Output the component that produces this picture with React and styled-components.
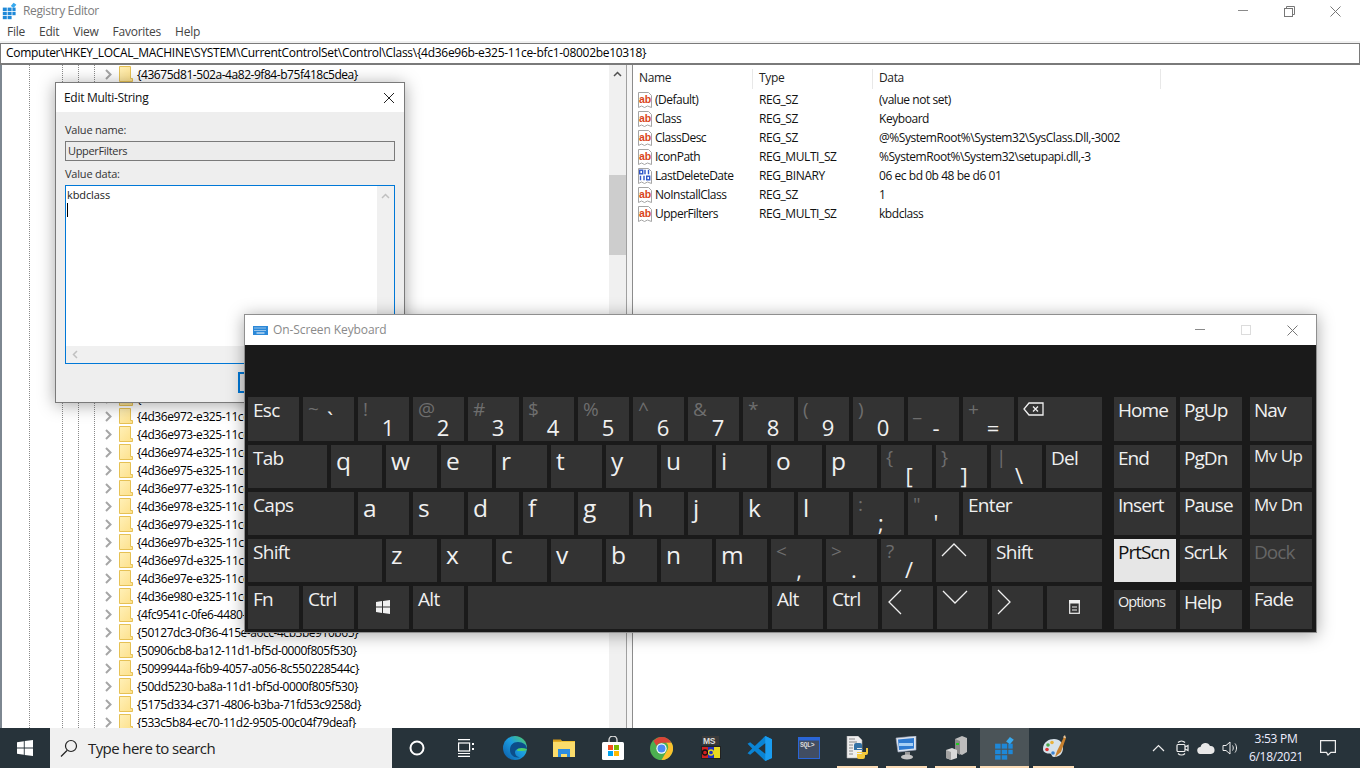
import React from 'react';
import styled, { createGlobalStyle } from 'styled-components';

const Global = createGlobalStyle`
  html, body { margin: 0; padding: 0; background: #fff; }
  body { font-family: "Open Sans", "Noto Sans", sans-serif; overflow: hidden; }
  * { box-sizing: border-box; }
`;
const UI = `"Open Sans", "Noto Sans", sans-serif`;

const Screen = styled.div`position: relative; width: 1360px; height: 768px; overflow: hidden; display: flex; flex-direction: column; background: #fff; font-family: ${UI}; font-size: 12px; letter-spacing: -0.35px;`;
const TitleBar = styled.div`height: 22px; display: flex; align-items: center; padding-left: 2px; color: #7c7c7c; flex: none;`;
const TitleText = styled.span`margin-left: 5px; margin-top: -2px;`;
const WinButtons = styled.div`margin-left: auto; display: flex; align-items: center; height: 22px; padding-right: 2px;`;
const WinBtn = styled.div`width: 46px; height: 22px; display: flex; align-items: center; justify-content: center;`;
const MenuBar = styled.div`height: 19px; display: flex; align-items: center; padding-left: 7px; gap: 14px; color: #444; flex: none; letter-spacing: -0.25px;`;
const MenuItem = styled.span``;
const AddressBar = styled.div`height: 24px; flex: none; margin-top: 0; background: #f0f0f0; padding-top: 2px;`;
const AddressField = styled.div`height: 22px; background: #fff; border: 1px solid #7a7a7a; border-bottom-width: 2px; padding-left: 5px; line-height: 18px; color: #000; letter-spacing: -0.29px;`;
const Panes = styled.div`flex: 1; display: flex; min-height: 0;`;
const TreePane = styled.div`width: 626px; flex: none; display: flex; border-left: 2px solid #7d8791;`;
const Tree = styled.div`flex: 1; overflow: hidden;
  background-image: repeating-linear-gradient(to bottom, #8a8a8a 0 1px, transparent 1px 2px), repeating-linear-gradient(to bottom, #8a8a8a 0 1px, transparent 1px 2px), repeating-linear-gradient(to bottom, #8a8a8a 0 1px, transparent 1px 2px), repeating-linear-gradient(to bottom, #8a8a8a 0 1px, transparent 1px 2px);
  background-size: 1px 100%; background-repeat: no-repeat;
  background-position: 27px 0, 60px 0, 76px 0, 92px 0;`;
const TreeRow = styled.div`height: 18px; flex: none; display: flex; align-items: center; padding-left: 102px; color: #000; white-space: nowrap;`;
const RowText = styled.span`margin-left: 4px; letter-spacing: -0.45px;`;
const ScrollBar = styled.div`width: 17px; flex: none; background: #f0f0f0; display: flex; flex-direction: column; align-items: center; padding-top: 6px;`;
const Thumb = styled.div`width: 100%; height: 80px; background: #cdcdcd; margin-top: 98px;`;
const ScrollEnd = styled.div`margin-top: auto; height: 8px;`;
const Splitter = styled.div`width: 6px; flex: none; background: #f5f5f5; border-left: 1px solid #a0a0a0;`;
const ListPane = styled.div`flex: 1; border-left: 1px solid #8c8c8c; padding-top: 4px; min-width: 0;`;
const ListHead = styled.div`height: 20px; display: flex; color: #222;`;
const HeadCell = styled.div`width: ${p => p.$w}px; flex: none; padding-left: 6px; line-height: 18px; border-right: 1px solid #e8e8e8;`;
const ListRow = styled.div`height: 19px; display: flex; align-items: center; color: #111; margin-top: ${p => p.$first ? 1 : 0}px;`;
const NameCell = styled.div`width: 120px; flex: none; display: flex; align-items: center; padding-left: 4px; gap: 2px; white-space: nowrap; letter-spacing: -0.5px;`;
const TypeCell = styled.div`width: 120px; flex: none; padding-left: 6px; letter-spacing: -0.42px;`;
const DataCell = styled.div`padding-left: 6px; white-space: nowrap; letter-spacing: -0.45px;`;

const Taskbar = styled.div`height: 40px; flex: none; background: #27333a; display: flex; align-items: stretch; border-top: 0;`;
const StartBtn = styled.div`width: 50px; display: flex; align-items: center; justify-content: center; flex: none;`;
const SearchBox = styled.div`width: 342px; flex: none; background: #f0f0f0; display: flex; align-items: center; padding-left: 10px; gap: 10px; color: #222; font-size: 15px; letter-spacing: -0.58px;`;
const TaskIcon = styled.div`position: relative; width: 49px; flex: none; display: flex; align-items: center; justify-content: center; background: ${p => p.$active ? '#4b5458' : 'transparent'};
  &::after { content: ""; display: ${p => p.$open ? 'block' : 'none'}; position: absolute; bottom: 0; left: ${p => p.$active ? 0 : 4}px; right: ${p => p.$active ? 0 : 4}px; height: 2px; background: #fbdcb6; }`;
const Tray = styled.div`margin-left: 68px; display: flex; align-items: center; flex: none; color: #eee;`;
const TrayItem = styled.div`width: 24px; display: flex; justify-content: center; align-items: center;`;
const Clock = styled.div`width: 66px; text-align: center; line-height: 18px; font-size: 12px; color: #eef; margin-left: 1px; letter-spacing: -0.3px;`;
const Notify = styled.div`width: 38px; display: flex; justify-content: center; align-items: center;`;

const Dialog = styled.div`position: absolute; left: 55px; top: 82px; width: 350px; height: 321px; background: #eeeeee; border: 1px solid #7a7a7a; box-shadow: 0 2px 16px rgba(0,0,0,.35); display: flex; flex-direction: column; color: #222;`;
const DialogTitle = styled.div`height: 29px; flex: none; background: #fff; display: flex; align-items: center; justify-content: space-between; padding: 0 9px 0 8px; color: #111; margin-bottom: 9px; letter-spacing: -0.3px;`;
const DialogLabel = styled.div`margin: ${p => p.$top || 0}px 0 0 9px; height: 18px; line-height: 18px; color: #333; font-size: 11px; letter-spacing: -0.2px;`;
const NameField = styled.div`margin: 2px 9px 0; height: 20px; border: 1px solid #7a7a7a; background: #ececec; padding-left: 2px; line-height: 17px; color: #333; font-size: 11px; letter-spacing: -0.33px;`;
const DataField = styled.div`margin: 2px 9px 0; height: 179px; border: 1px solid #0078d7; background: #fff; display: flex; flex-direction: column; overflow: hidden;`;
const DataMain = styled.div`flex: 1; display: flex; min-height: 0;`;
const DataText = styled.div`flex: 1; padding: 1px 0 0 1px; line-height: 16px; color: #222; font-size: 11px; letter-spacing: -0.1px;`;
const Caret = styled.div`width: 1px; height: 14px; background: #000;`;
const InnerVScroll = styled.div`width: 17px; background: #f0f0f0; display: flex; justify-content: center; padding-top: 7px;`;
const InnerHScroll = styled.div`height: 17px; flex: none; background: #f0f0f0; display: flex; align-items: center; padding-left: 6px;`;
const DialogBtns = styled.div`display: flex; padding: 8px 0 0 182px;`;
const OkBtn = styled.div`width: 75px; height: 21px; border: 2px solid #0078d7; background: #e1e1e1;`;

const Keyboard = styled.div`position: absolute; left: 244px; top: 314px; width: 1073px; height: 319px; background: #1a1a1a; border: 1px solid #8f8f8f; box-shadow: 0 2px 16px rgba(0,0,0,.35); display: flex; flex-direction: column; letter-spacing: 0;`;
const KbTitle = styled.div`height: 30px; flex: none; background: #fff; display: flex; align-items: center; padding-left: 8px; color: #8a8a8a; font-size: 12px; letter-spacing: -0.1px;`;
const KbTitleText = styled.span`margin: -2px 0 0 5px;`;
const KbBtns = styled.div`margin-left: auto; display: flex; margin-right: 1px; align-items: center;`;
const KbBtn = styled.div`width: 46px; height: 30px; display: flex; align-items: center; justify-content: center;`;
const KbBody = styled.div`flex: 1; display: flex; padding: 52px 0 0 3px; gap: 12px;`;
const KeyGrid = styled.div`display: flex; flex-direction: column; gap: 4px;`;
const KeyRow = styled.div`display: flex; gap: 4px; height: ${p => p.$tall ? 44 : 43}px;`;
const Key = styled.div`width: ${p => p.$w}px; margin-top: ${p => p.$drop || 0}px; margin-left: ${p => p.$gap || 0}px; flex: none; background: ${p => p.$lit ? '#e6e6e6' : '#333333'}; color: ${p => p.$lit ? '#111' : p.$dim ? '#666' : '#f0f0f0'}; display: flex; flex-direction: column; padding: 0 0 0 ${p => p.$pad ?? 5}px;`;
const Word = styled.div`font-size: ${p => p.$size || 19}px; line-height: 26px; letter-spacing: ${p => p.$track ?? -0.7}px; margin-top: ${p => p.$top ?? 0}px; white-space: nowrap;`;
const Letter = styled.div`font-size: 24.5px; line-height: 34px; margin-top: -1px;`;
const Shifted = styled.div`font-size: 19px; line-height: 24px; color: #6e6e6e; height: 18px;`;
const Main = styled.div`width: 20px; text-align: center; font-size: 22px; line-height: 24px; margin-left: ${p => p.$shift}px; margin-top: ${p => p.$raised ? -8 : 0}px;`;
const IconSlot = styled.div`display: flex; padding-top: ${p => p.$top}px; padding-left: ${p => p.$left || 0}px;`;

const ROWS = [
  ['Esc', ['~', '`'], ['!', '1'], ['@', '2'], ['#', '3'], ['$', '4'], ['%', '5'], ['^', '6'], ['&', '7'], ['*', '8'], ['(', '9'], [')', '0'], ['_', '-'], ['+', '='], { icon: 'back', w: 84 }],
  [{ t: 'Tab', w: 79 }, 'q', 'w', 'e', 'r', 't', 'y', 'u', 'i', 'o', 'p', ['{', '['], ['}', ']'], ['|', '\\'], { t: 'Del', w: 56 }],
  [{ t: 'Caps', w: 106 }, 'a', 's', 'd', 'f', 'g', 'h', 'j', 'k', 'l', [':', ';'], ['"', "'"], { t: 'Enter', w: 139 }],
  [{ t: 'Shift', w: 134 }, 'z', 'x', 'c', 'v', 'b', 'n', 'm', ['<', ','], ['>', '.'], ['?', '/'], { icon: 'up' }, { t: 'Shift', w: 111 }],
  ['Fn', 'Ctrl', { icon: 'win' }, 'Alt', { t: '', w: 300 }, 'Alt', 'Ctrl', { icon: 'left' }, { icon: 'down' }, { icon: 'right' }, { icon: 'menu', w: 55 }],
];

const NAV = [
  [{ t: 'Home' }, { t: 'PgUp' }, { t: 'Nav', gap: 4 }],
  [{ t: 'End' }, { t: 'PgDn' }, { t: 'Mv Up', gap: 4, size: 17, top: -2, track: -0.5 }],
  [{ t: 'Insert' }, { t: 'Pause' }, { t: 'Mv Dn', gap: 4, size: 17, track: -0.5 }],
  [{ t: 'PrtScn', lit: true }, { t: 'ScrLk' }, { t: 'Dock', gap: 4, dim: true }],
  [{ t: 'Options', size: 14.5, drop: 4, top: -1 }, { t: 'Help', drop: 4, top: -1 }, { t: 'Fade', gap: 4 }],
];

const stroke = { fill: 'none', stroke: '#f0f0f0', strokeWidth: 1.3 };
function KeyIcon({ name }) {
  switch (name) {
    case 'back': return <IconSlot $top={5}><svg width="22" height="14" viewBox="0 0 22 14"><path d="M6 1h14v12H6L1 7z" {...stroke} /><path d="M10 4.500l5 5M15 4.500l-5 5" {...stroke} /></svg></IconSlot>;
    case 'up': return <IconSlot $top={3}><svg width="26" height="15" viewBox="0 0 26 15"><path d="M1 14L13 2l12 12" {...stroke} /></svg></IconSlot>;
    case 'down': return <IconSlot $top={4}><svg width="26" height="15" viewBox="0 0 26 15"><path d="M1 1l12 12L25 1" {...stroke} /></svg></IconSlot>;
    case 'left': return <IconSlot $top={3}><svg width="15" height="26" viewBox="0 0 15 26"><path d="M14 1L2 13l12 12" {...stroke} /></svg></IconSlot>;
    case 'right': return <IconSlot $top={3} $left={0}><svg width="15" height="26" viewBox="0 0 15 26"><path d="M1 1l12 12L1 25" {...stroke} /></svg></IconSlot>;
    case 'win': return <IconSlot $top={14} $left={13}><svg width="14" height="14" viewBox="0 0 14 14" fill="#f0f0f0"><path d="M0 2l6-.9V6.600H0zM7 1l7-1v6.600H7zM0 7.400h6V13L0 12zM7 7.400h7V14l-7-1z" /></svg></IconSlot>;
    case 'menu': return <IconSlot $top={14} $left={17}><svg width="11" height="14" viewBox="0 0 11 14"><rect x=".7" y=".7" width="9.600" height="12.600" fill="none" stroke="#f0f0f0" strokeWidth="1.200" /><rect x="0" y="0" width="11" height="3.500" fill="#f0f0f0" /><path d="M3 7h5M3 10h5" stroke="#f0f0f0" strokeWidth="1" /></svg></IconSlot>;
    default: return null;
  }
}

function renderKey(k, i) {
  if (Array.isArray(k)) {
    const raised = k[1] === '`';
    const shift = raised ? 12 : /[0-9=]/.test(k[1]) ? 15 : 13;
    return <Key key={i} $w={51}><Shifted>{k[0]}</Shifted><Main $raised={raised} $shift={shift}>{k[1]}</Main></Key>;
  }
  if (typeof k === 'string') {
    if (k.length === 1) return <Key key={i} $w={51}><Letter>{k}</Letter></Key>;
    return <Key key={i} $w={51}><Word>{k}</Word></Key>;
  }
  if (k.icon) return <Key key={i} $w={k.w || 51}><KeyIcon name={k.icon} /></Key>;
  return <Key key={i} $w={k.w}><Word>{k.t}</Word></Key>;
}

const GUIDS = [
  '{43675d81-502a-4a82-9f84-b75f418c5dea}', '{4658ee7e-f050-11d1-b6bd-00c04fa372a7}', '{48721b56-6795-11d2-b1a8-0080c72e74a2}', '{48d3ebc4-4cf8-48ff-b869-9c68ad42eb9f}', '{49ce6ac8-6f86-11d2-b1e5-0080c72e74a2}', '{4a3dff12-6b3d-11d1-a4f2-00c04fb9dd11}', '{4d36e965-e325-11ce-bfc1-08002be10318}',
  ...['966', '967', '968', '969', '96a', '96b', '96c', '96d', '96e', '96f', '970', '971', '972', '973', '974', '975', '977', '978', '979', '97b', '97d', '97e', '980'].map(s => `{4d36e${s}-e325-11ce-bfc1-08002be10318}`),
  '{4fc9541c-0fe6-4480-a4f6-b495a56d4c3d}', '{50127dc3-0f36-415e-a6cc-4cb3be910b65}', '{50906cb8-ba12-11d1-bf5d-0000f805f530}', '{5099944a-f6b9-4057-a056-8c550228544c}', '{50dd5230-ba8a-11d1-bf5d-0000f805f530}', '{5175d334-c371-4806-b3ba-71fd53c9258d}', '{533c5b84-ec70-11d2-9505-00c04f79deaf}',
];

const VALUES = [
  ['(Default)', 'REG_SZ', '(value not set)'],
  ['Class', 'REG_SZ', 'Keyboard'],
  ['ClassDesc', 'REG_SZ', '@%SystemRoot%\\System32\\SysClass.Dll,-3002'],
  ['IconPath', 'REG_MULTI_SZ', '%SystemRoot%\\System32\\setupapi.dll,-3'],
  ['LastDeleteDate', 'REG_BINARY', '06 ec bd 0b 48 be d6 01'],
  ['NoInstallClass', 'REG_SZ', '1'],
  ['UpperFilters', 'REG_MULTI_SZ', 'kbdclass'],
];

const Chevron = () => <svg width="9" height="11" viewBox="0 0 9 11" style={{ flex: 'none' }}><path d="M2 1l4.500 4.500L2 10" fill="none" stroke="#a6a6a6" strokeWidth="2" /></svg>;
const Folder = () => <svg width="14" height="16" viewBox="0 0 14 16" style={{ flex: 'none', marginLeft: 6 }}><defs><linearGradient id="fo" x1="0" y1="0" x2="1" y2="1"><stop offset="0" stopColor="#fff0b8" /><stop offset="1" stopColor="#fde08a" /></linearGradient></defs><path d="M.5.5h11v12h2v3H.5z" fill="url(#fo)" stroke="#e6c154" /></svg>;
const Page = () => <path d="M1.500 1.500h10l3 3v12l-4-1.500-3 1.500-3-1.500-3 1.500z" fill="#fff" stroke="#a5a5a5" />;
const AbIcon = () => <svg width="16" height="18" viewBox="0 0 16 18" style={{ flex: 'none' }}><Page /><text x="2" y="11.500" fontFamily="Liberation Sans" fontWeight="700" fontSize="10.500" fill="#d9461c" letterSpacing="0">ab</text></svg>;
const BinIcon = () => <svg width="16" height="18" viewBox="0 0 16 18" style={{ flex: 'none' }}><Page /><g fill="none" stroke="#2f55c8" strokeWidth="1.400"><rect x="2.700" y="3.200" width="3" height="3.600" /><path d="M8 2.700v4.500M11.500 2.700v4.500M3.500 8.700v4.600M7 8.700v4.600" /><rect x="9.700" y="9.200" width="3" height="3.600" /></g></svg>;

const WinLogo = ({ size = 16, c = '#fff' }) => <svg width={size} height={size} viewBox="0 0 16 16" fill={c}><path d="M0 2.200L6.800 1.200v6.300H0zM7.700 1.100L16 0v7.500H7.700zM0 8.400h6.800v6.400L0 13.800zM7.700 8.400H16V16l-8.300-1.100z" /></svg>;

const Regedit = ({ size = 20 }) => <svg width={size} height={size * 1.1} viewBox="0 0 20 22"><g fill="#1e88d8"><rect x="1" y="7" width="5" height="4.500" /><rect x="7" y="7" width="5" height="4.500" /><rect x="1" y="12.500" width="5" height="4" /><rect x="7" y="12.500" width="5" height="4" /><rect x="13" y="12.500" width="4" height="4" /><rect x="1" y="17.500" width="5" height="4" /><rect x="7" y="17.500" width="5" height="4" /><rect x="13" y="7" width="4" height="4.500" /></g><path d="M11 5l3.500-4 3.500 2.500-3.500 4z" fill="#38a9ee" /></svg>;

const Edge = () => <svg width="24" height="24" viewBox="0 0 24 24"><defs><linearGradient id="eg" x1="0" y1="1" x2="1" y2="0"><stop offset="0" stopColor="#0c59a4" /><stop offset=".55" stopColor="#1b9de2" /><stop offset="1" stopColor="#58d05a" /></linearGradient></defs><circle cx="12" cy="12" r="12" fill="url(#eg)" /><path d="M24 13c0-4-4-7-9-7-5 0-8 3-8 8 0 5 5 9 10 7-3 0-5-2-5-5 0-2 2-3 4-3 3 0 5 1 8 0z" fill="#0c4d8a" /><path d="M24 13c-1 2-4 2-7 2-2 0-3 0-3-1 0-2 5-3 10-1z" fill="#4fce6a" /></svg>;
const Explorer = () => <svg width="22" height="20" viewBox="0 0 22 20"><path d="M0 2h8l1 1h13v16H0z" fill="#f1c232" /><path d="M0 4h22v15H0z" fill="#fbdc6b" /><path d="M0 1.500h8v2H0z" fill="#d49b1b" /><path d="M5 11h12v8h-3v-3H8v3H5z" fill="#2d8de0" /></svg>;
const Store = () => <svg width="24" height="24" viewBox="0 0 24 24"><path d="M8 7V4a4 4 0 018 0v3" fill="none" stroke="#ddd" strokeWidth="1.300" /><rect x="1" y="6" width="22" height="18" rx="1.500" fill="#fff" /><rect x="7" y="9" width="5" height="5" fill="#f25022" /><rect x="13" y="9" width="5" height="5" fill="#7fba00" /><rect x="7" y="15" width="5" height="5" fill="#00a4ef" /><rect x="13" y="15" width="5" height="5" fill="#ffb900" /></svg>;
const Chrome = () => <svg width="23" height="23" viewBox="0 0 24 24"><circle cx="12" cy="12" r="12" fill="#4caf50" /><path d="M12 0a12 12 0 0110.400 6H12a6 6 0 00-5.200 3L3.600 4.200A12 12 0 0112 0z" fill="#db4437" /><path d="M22.400 6A12 12 0 0112 24l5.200-9a6 6 0 00-.4-9z" fill="#fbc02d" /><circle cx="12" cy="12" r="5.400" fill="#fff" /><circle cx="12" cy="12" r="4.200" fill="#4a8af4" /></svg>;
const Dos = () => <svg width="20" height="24" viewBox="0 0 20 24"><rect x="1" y="0" width="17" height="9" fill="#3a3a3a" /><text x="2" y="8" fontFamily="Liberation Sans" fontSize="8.500" fontWeight="700" fill="#ddd">MS</text><rect x="0" y="10" width="20" height="13" fill="#222" /><rect x="1" y="11" width="6" height="11" fill="#d02020" /><rect x="7" y="11" width="6" height="11" fill="#2030c0" /><rect x="13" y="11" width="6" height="11" fill="#e8d820" /><circle cx="10" cy="16.500" r="2.500" fill="none" stroke="#e8d820" strokeWidth="1.300" /><circle cx="4" cy="16.500" r="2.500" fill="none" stroke="#111" strokeWidth="1.300" /></svg>;
const VSCode = () => <svg width="25" height="25" viewBox="0 0 24 24"><path d="M17.500 0L24 3v18l-6.500 3-10-9.500L3 18l-2.500-1.500L5 12 .5 7.500 3 6l4.500 3.500z" fill="#0a84d4" /><path d="M17.500 0L24 3v18l-6.500 3z" fill="#1a9df0" /><path d="M17.500 7L11 12l6.500 5z" fill="#27333a" /></svg>;
const Sql = () => <svg width="22" height="22" viewBox="0 0 22 22"><rect x=".5" y=".5" width="21" height="21" fill="#414d62" stroke="#2a66d8" /><rect x="1" y="1" width="20" height="2.500" fill="#2a66d8" /><text x="2" y="10" fontFamily="Liberation Mono" fontSize="6.500" fontWeight="700" fill="#d8d8d8">SQL&gt;</text></svg>;
const PyFile = () => <svg width="23" height="25" viewBox="0 0 23 25"><path d="M1 0h11l4 4v18H1z" fill="#eee" stroke="#aaa" strokeWidth=".6" /><path d="M3 3h6M3 6h8M3 9h4M3 12h4M3 15h4M3 18h4" stroke="#888" strokeWidth="1" /><path d="M8 13V9a2 2 0 012-2h4a2 2 0 012 2v3h-5v1h6v1H8z" fill="#3572a5" /><path d="M22 12v5a2 2 0 01-2 2h-1v2a2 2 0 01-2 2h-4a2 2 0 01-2-2v-3h5v-1h-5v-1h9v-4z" fill="#f5c93a" /></svg>;
const Monitor = () => <svg width="24" height="24" viewBox="0 0 24 24"><path d="M1 2l20-2v14L3 16z" fill="#dfe6f0" stroke="#9aa5b8" strokeWidth=".6" /><path d="M3 3.500l16-1.500v10.500L4 14z" fill="#2f7bd1" /><path d="M4 7h14v3H4z" fill="#a8d0f5" /><path d="M10 16h5v3h-5z" fill="#999" /><ellipse cx="12" cy="21" rx="6" ry="2.500" fill="#c4c4c4" /></svg>;
const Device = () => <svg width="22" height="24" viewBox="0 0 22 24"><path d="M10 3l7-3 5 2v14l-5 3-7-3z" fill="#bdbdbd" /><path d="M10 3l5 2v14l-5-3z" fill="#8a8a8a" /><path d="M11 7h3v2h-3z" fill="#2c2" /><path d="M1 14l6-2 5 2v8l-6 2-5-2z" fill="#d9d9d9" /><path d="M6 16v8l-5-2v-8z" fill="#a2a2a2" /></svg>;
const Palette = () => <svg width="26" height="26" viewBox="0 0 26 26"><path d="M2 14C2 7 8 4 13 4c6 0 9 4 9 9 0 5-3 9-9 9-2 0-2-2-3-3s-3 0-5-1-3-2-3-4z" fill="#d7e2ea" /><circle cx="7" cy="10" r="1.800" fill="#49a84c" /><circle cx="11" cy="7.500" r="1.800" fill="#e8b13a" /><circle cx="6" cy="14.500" r="1.800" fill="#d33" /><circle cx="12" cy="18" r="1.800" fill="#3b82d0" /><path d="M14 22l2-6 7-14 2 1-5 14z" fill="#c9822f" /><path d="M22 2l2-2 1 3-2 0z" fill="#e8c59a" /></svg>;

const ICONS = [
  { el: <svg width="18" height="18" viewBox="0 0 18 18"><circle cx="9" cy="9" r="6.500" fill="none" stroke="#fff" strokeWidth="2" /></svg> },
  { el: <svg width="16" height="18" viewBox="0 0 16 18" fill="none" stroke="#fff" strokeWidth="1.200"><path d="M0 .6h12M0 17.400h12M0 14.500h12" /><rect x=".6" y="4" width="11" height="8" /><path d="M15 4v2M15 9v2" strokeWidth="2" /></svg> },
  { el: <Edge /> }, { el: <Explorer /> }, { el: <Store /> }, { el: <Chrome /> }, { el: <Dos /> }, { el: <VSCode /> }, { el: <Sql /> },
  { el: <PyFile />, open: true }, { el: <Monitor />, open: true }, { el: <Device />, open: true }, { el: <Regedit size={22} />, open: true, active: true }, { el: <Palette />, open: true },
];

export default function App() {
  return (
    <Screen>
      <Global />
      <TitleBar>
        <Regedit size={16} />
        <TitleText>Registry Editor</TitleText>
        <WinButtons>
          <WinBtn><svg width="10" height="2"><path d="M0 .5h10" stroke="#8a8a8a" /></svg></WinBtn>
          <WinBtn><svg width="11" height="11" viewBox="0 0 11 11" fill="none" stroke="#777"><rect x=".5" y="2.500" width="8" height="8" /><path d="M2.500 2.500v-2h8v8h-2" /></svg></WinBtn>
          <WinBtn><svg width="11" height="11" viewBox="0 0 11 11" stroke="#777"><path d="M.5.5l10 10M10.500.5l-10 10" /></svg></WinBtn>
        </WinButtons>
      </TitleBar>
      <MenuBar>
        {['File', 'Edit', 'View', 'Favorites', 'Help'].map(m => <MenuItem key={m}>{m}</MenuItem>)}
      </MenuBar>
      <AddressBar>
        <AddressField>Computer\HKEY_LOCAL_MACHINE\SYSTEM\CurrentControlSet\Control\Class\{'{'}4d36e96b-e325-11ce-bfc1-08002be10318{'}'}</AddressField>
      </AddressBar>
      <Panes>
        <TreePane>
          <Tree>
            {GUIDS.map(g => <TreeRow key={g}><Chevron /><Folder /><RowText>{g}</RowText></TreeRow>)}
          </Tree>
          <ScrollBar>
            <svg width="9" height="6" viewBox="0 0 9 6"><path d="M1 5l3.500-3.500L8 5" fill="none" stroke="#505050" strokeWidth="1.500" /></svg>
            <Thumb />
            <ScrollEnd />
          </ScrollBar>
        </TreePane>
        <Splitter />
        <ListPane>
          <ListHead>
            <HeadCell $w={120}>Name</HeadCell>
            <HeadCell $w={120}>Type</HeadCell>
            <HeadCell $w={288}>Data</HeadCell>
          </ListHead>
          {VALUES.map((v, i) => (
            <ListRow key={v[0]} $first={i === 0}>
              <NameCell>{v[1] === 'REG_BINARY' ? <BinIcon /> : <AbIcon />}{v[0]}</NameCell>
              <TypeCell>{v[1]}</TypeCell>
              <DataCell>{v[2]}</DataCell>
            </ListRow>
          ))}
        </ListPane>
      </Panes>
      <Taskbar>
        <StartBtn><WinLogo /></StartBtn>
        <SearchBox>
          <svg width="18" height="18" viewBox="0 0 18 18" fill="none" stroke="#222" strokeWidth="1.200"><circle cx="11" cy="7" r="5.500" /><path d="M7 11.500L1 17.500" /></svg>
          Type here to search
        </SearchBox>
        {ICONS.map((ic, i) => <TaskIcon key={i} $open={ic.open} $active={ic.active}>{ic.el}</TaskIcon>)}
        <Tray>
          <TrayItem><svg width="13" height="8" viewBox="0 0 13 8"><path d="M1 7l5.500-5.500L12 7" fill="none" stroke="#eee" strokeWidth="1.200" /></svg></TrayItem>
          <TrayItem><svg width="13" height="18" viewBox="0 0 13 18" fill="none" stroke="#eee" strokeWidth="1.200"><path d="M2 3.500c2-2 5-2 7 0M2 14.500c2 2 5 2 7 0" /><rect x="1" y="5.500" width="8" height="7" rx="1" /><path d="M9 8l3-1.500v5L9 10" /></svg></TrayItem>
          <TrayItem><svg width="18" height="12" viewBox="0 0 18 12" fill="#e8e8e8"><path d="M4 12a3.500 3.500 0 01-.5-7A5 5 0 0113 4a4 4 0 011 8z" /></svg></TrayItem>
          <TrayItem><svg width="17" height="16" viewBox="0 0 17 16" fill="none" stroke="#eee" strokeWidth="1"><path d="M1 5.500h3L8 2v12l-4-3.500H1z" /><path d="M10.500 5.500c1 1.500 1 3.500 0 5M13 3.500c2 2.500 2 6.500 0 9" /></svg></TrayItem>
          <Clock>3:53 PM<br />6/18/2021</Clock>
          <Notify><svg width="16" height="16" viewBox="0 0 16 16" fill="none" stroke="#eee" strokeWidth="1.200"><path d="M.6.6h14.800v11.800h-4.500L8 15l-1.500-2.600H.6z" /></svg></Notify>
        </Tray>
      </Taskbar>

      <Dialog>
        <DialogTitle>
          Edit Multi-String
          <svg width="12" height="12" viewBox="0 0 12 12" stroke="#222"><path d="M1 1l10 10M11 1L1 11" /></svg>
        </DialogTitle>
        <DialogLabel>Value name:</DialogLabel>
        <NameField>UpperFilters</NameField>
        <DialogLabel $top={4}>Value data:</DialogLabel>
        <DataField>
          <DataMain>
            <DataText>kbdclass<Caret /></DataText>
            <InnerVScroll><svg width="9" height="6" viewBox="0 0 9 6"><path d="M1 5l3.500-3.500L8 5" fill="none" stroke="#c0c0c0" strokeWidth="1.500" /></svg></InnerVScroll>
          </DataMain>
          <InnerHScroll><svg width="6" height="9" viewBox="0 0 6 9"><path d="M5 1L1.500 4.500 5 8" fill="none" stroke="#c0c0c0" strokeWidth="1.500" /></svg></InnerHScroll>
        </DataField>
        <DialogBtns><OkBtn /></DialogBtns>
      </Dialog>

      <Keyboard>
        <KbTitle>
          <svg width="15" height="9" viewBox="0 0 15 9"><rect width="15" height="9" fill="#2b88d8" /><path d="M1.500 2h12M1.500 4.500h12" stroke="#fff" strokeDasharray="1 1" /><path d="M3.500 7h8" stroke="#fff" /></svg>
          <KbTitleText>On-Screen Keyboard</KbTitleText>
          <KbBtns>
            <KbBtn><svg width="10" height="2"><path d="M0 .5h10" stroke="#8a8a8a" /></svg></KbBtn>
            <KbBtn><svg width="10" height="10"><rect x=".5" y=".5" width="9" height="9" fill="none" stroke="#dcdcdc" /></svg></KbBtn>
            <KbBtn><svg width="11" height="11" viewBox="0 0 11 11" stroke="#777"><path d="M.5.5l10 10M10.500.5l-10 10" /></svg></KbBtn>
          </KbBtns>
        </KbTitle>
        <KbBody>
          <KeyGrid>
            {ROWS.map((r, i) => <KeyRow key={i} $tall={i === 0}>{r.map(renderKey)}</KeyRow>)}
          </KeyGrid>
          <KeyGrid>
            {NAV.map((r, i) => (
              <KeyRow key={i} $tall={i === 0}>
                {r.map(k => <Key key={k.t} $w={62} $pad={4} $gap={k.gap} $drop={k.drop} $lit={k.lit} $dim={k.dim}><Word $size={k.size} $top={k.top} $track={k.track ?? -0.95}>{k.t}</Word></Key>)}
              </KeyRow>
            ))}
          </KeyGrid>
        </KbBody>
      </Keyboard>
    </Screen>
  );
}
